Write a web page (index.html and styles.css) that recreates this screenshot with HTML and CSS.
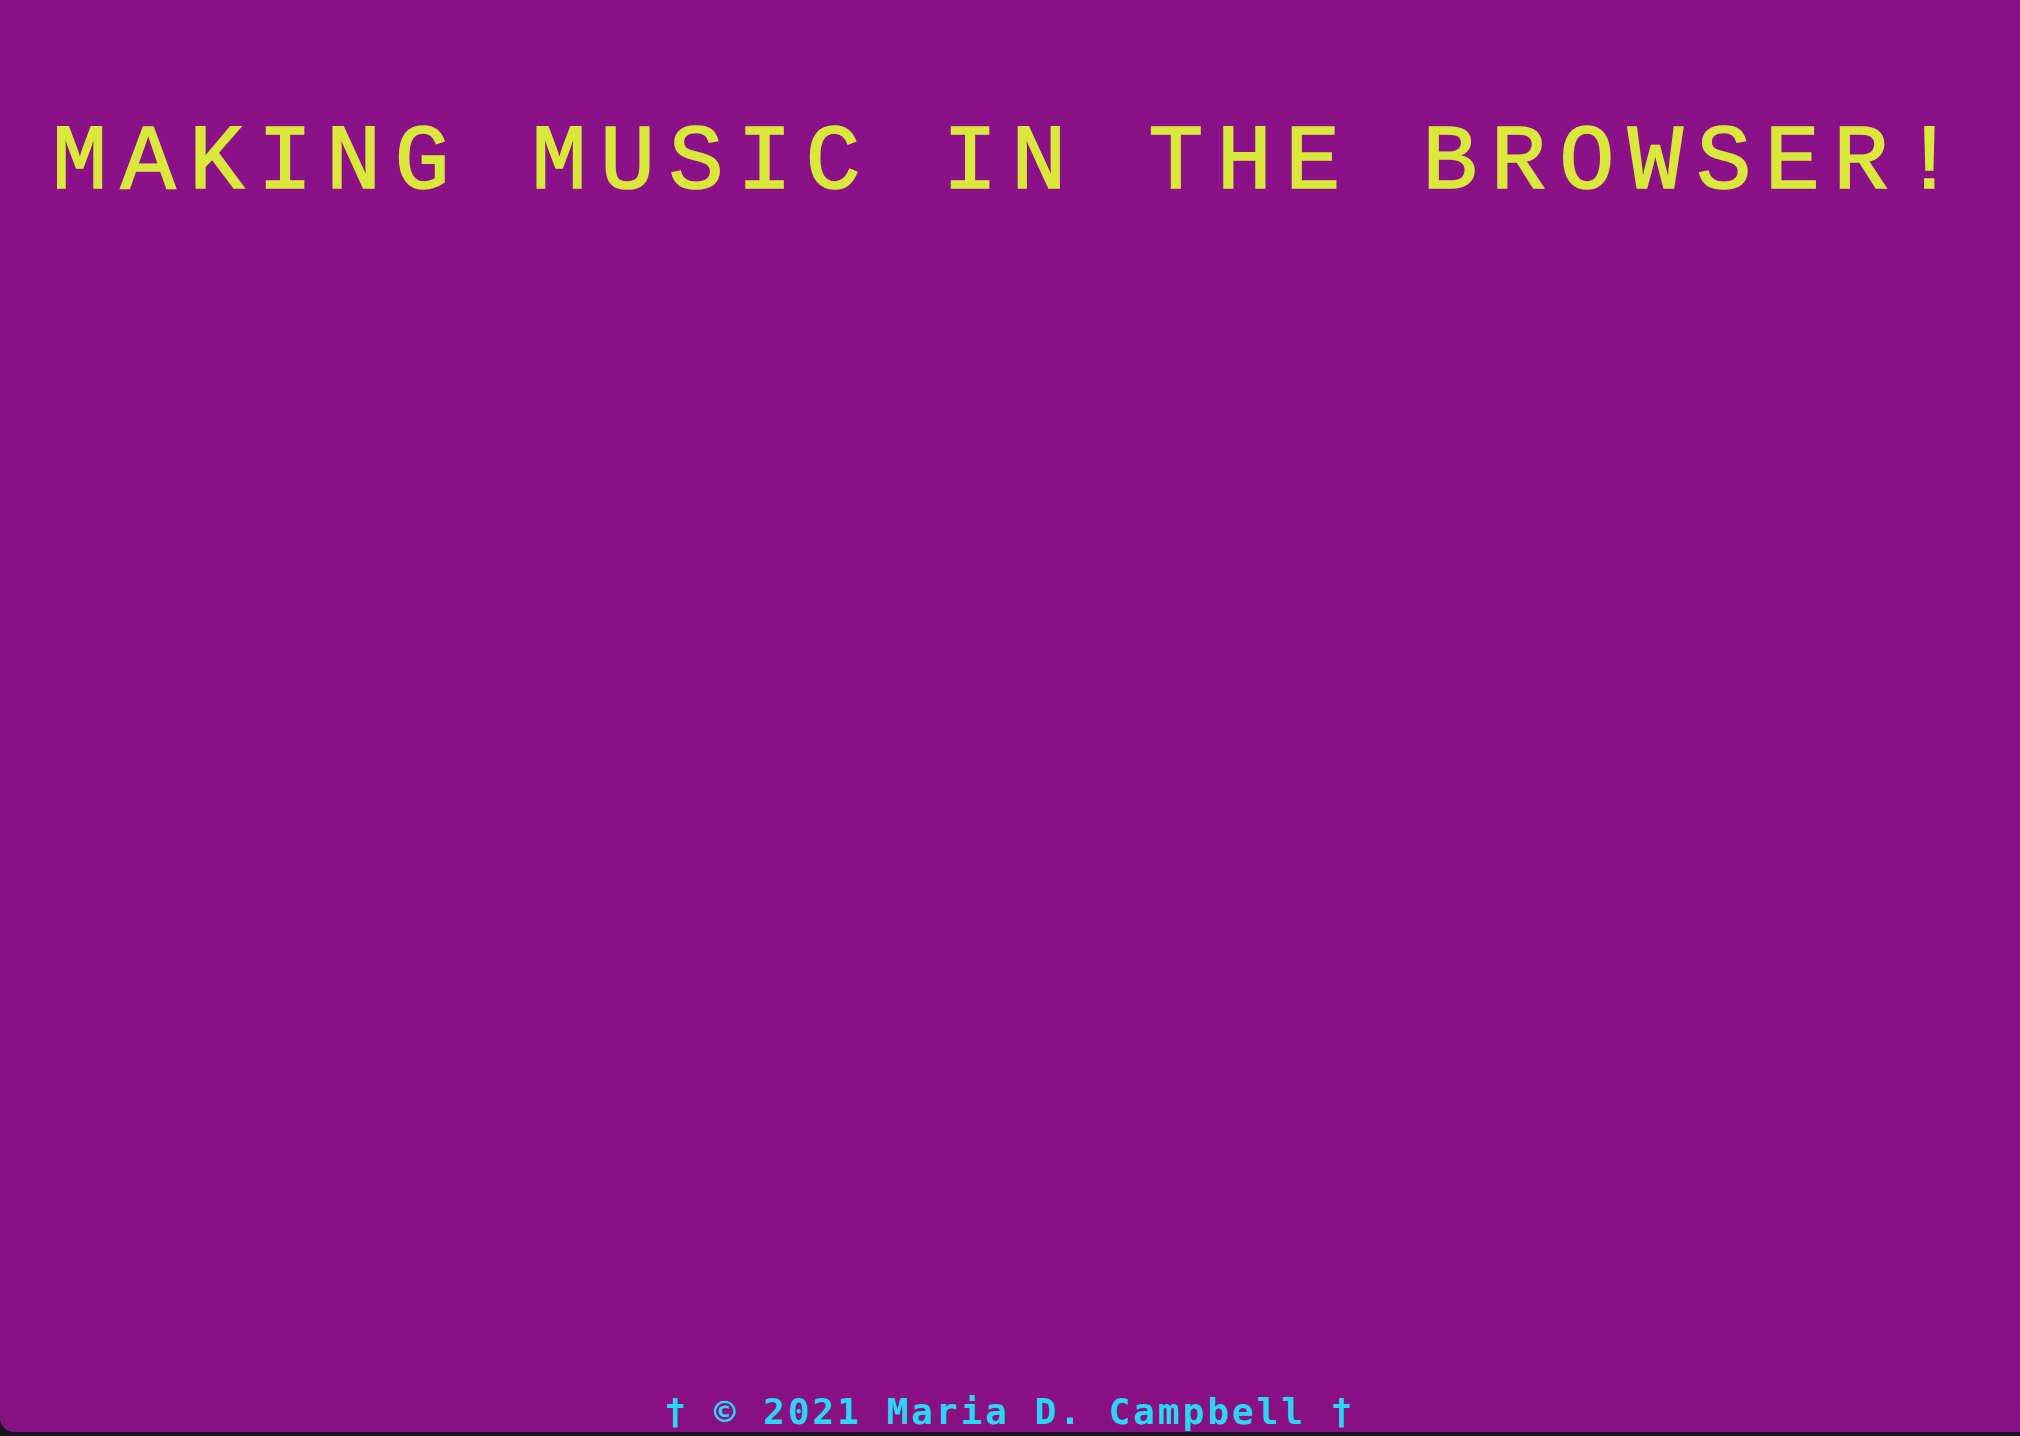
FILE: index.html
```html
<!DOCTYPE html>
<html lang="en">
<head>
<meta charset="utf-8">
<title>Making Music in the Browser</title>
<link rel="stylesheet" href="styles.css">
</head>
<body>
<div class="page">
  <header class="top">
    <h1 class="title">MAKING MUSIC IN THE BROWSER!</h1>
  </header>
  <main class="stage"></main>
  <footer class="foot">
    <p class="credit">† © 2021 Maria D. Campbell †</p>
  </footer>
</div>
</body>
</html>
```

FILE: styles.css
```css
html {
  background: #16141d;
  height: 100%;
}
body {
  margin: 0;
  height: 100%;
}
.page {
  height: 1432px;
  background: linear-gradient(to bottom, #8b1189 0%, #8b1189 95%, #861080 100%);
  border-bottom-left-radius: 14px;
  display: flex;
  flex-direction: column;
  overflow: hidden;
}
.top {
  padding-top: 111px;
}
.title {
  margin: 0;
  padding-left: 52px;
  font-family: "Courier New", "Nimbus Mono PS", "FreeMono", "Liberation Mono", monospace;
  font-weight: normal;
  font-size: 92px;
  line-height: 106px;
  letter-spacing: 13.3px;
  color: #d9e83b;
  white-space: nowrap;
  -webkit-text-stroke: 1.5px #d9e83b;
}
.stage {
  flex: 1;
}
.foot {
  display: flex;
  justify-content: center;
}
.credit {
  margin: 0;
  font-family: "DejaVu Sans Mono", monospace;
  font-weight: bold;
  font-size: 36px;
  line-height: 40px;
  letter-spacing: 3px;
  color: #2ad6f2;
  white-space: nowrap;
}
```
